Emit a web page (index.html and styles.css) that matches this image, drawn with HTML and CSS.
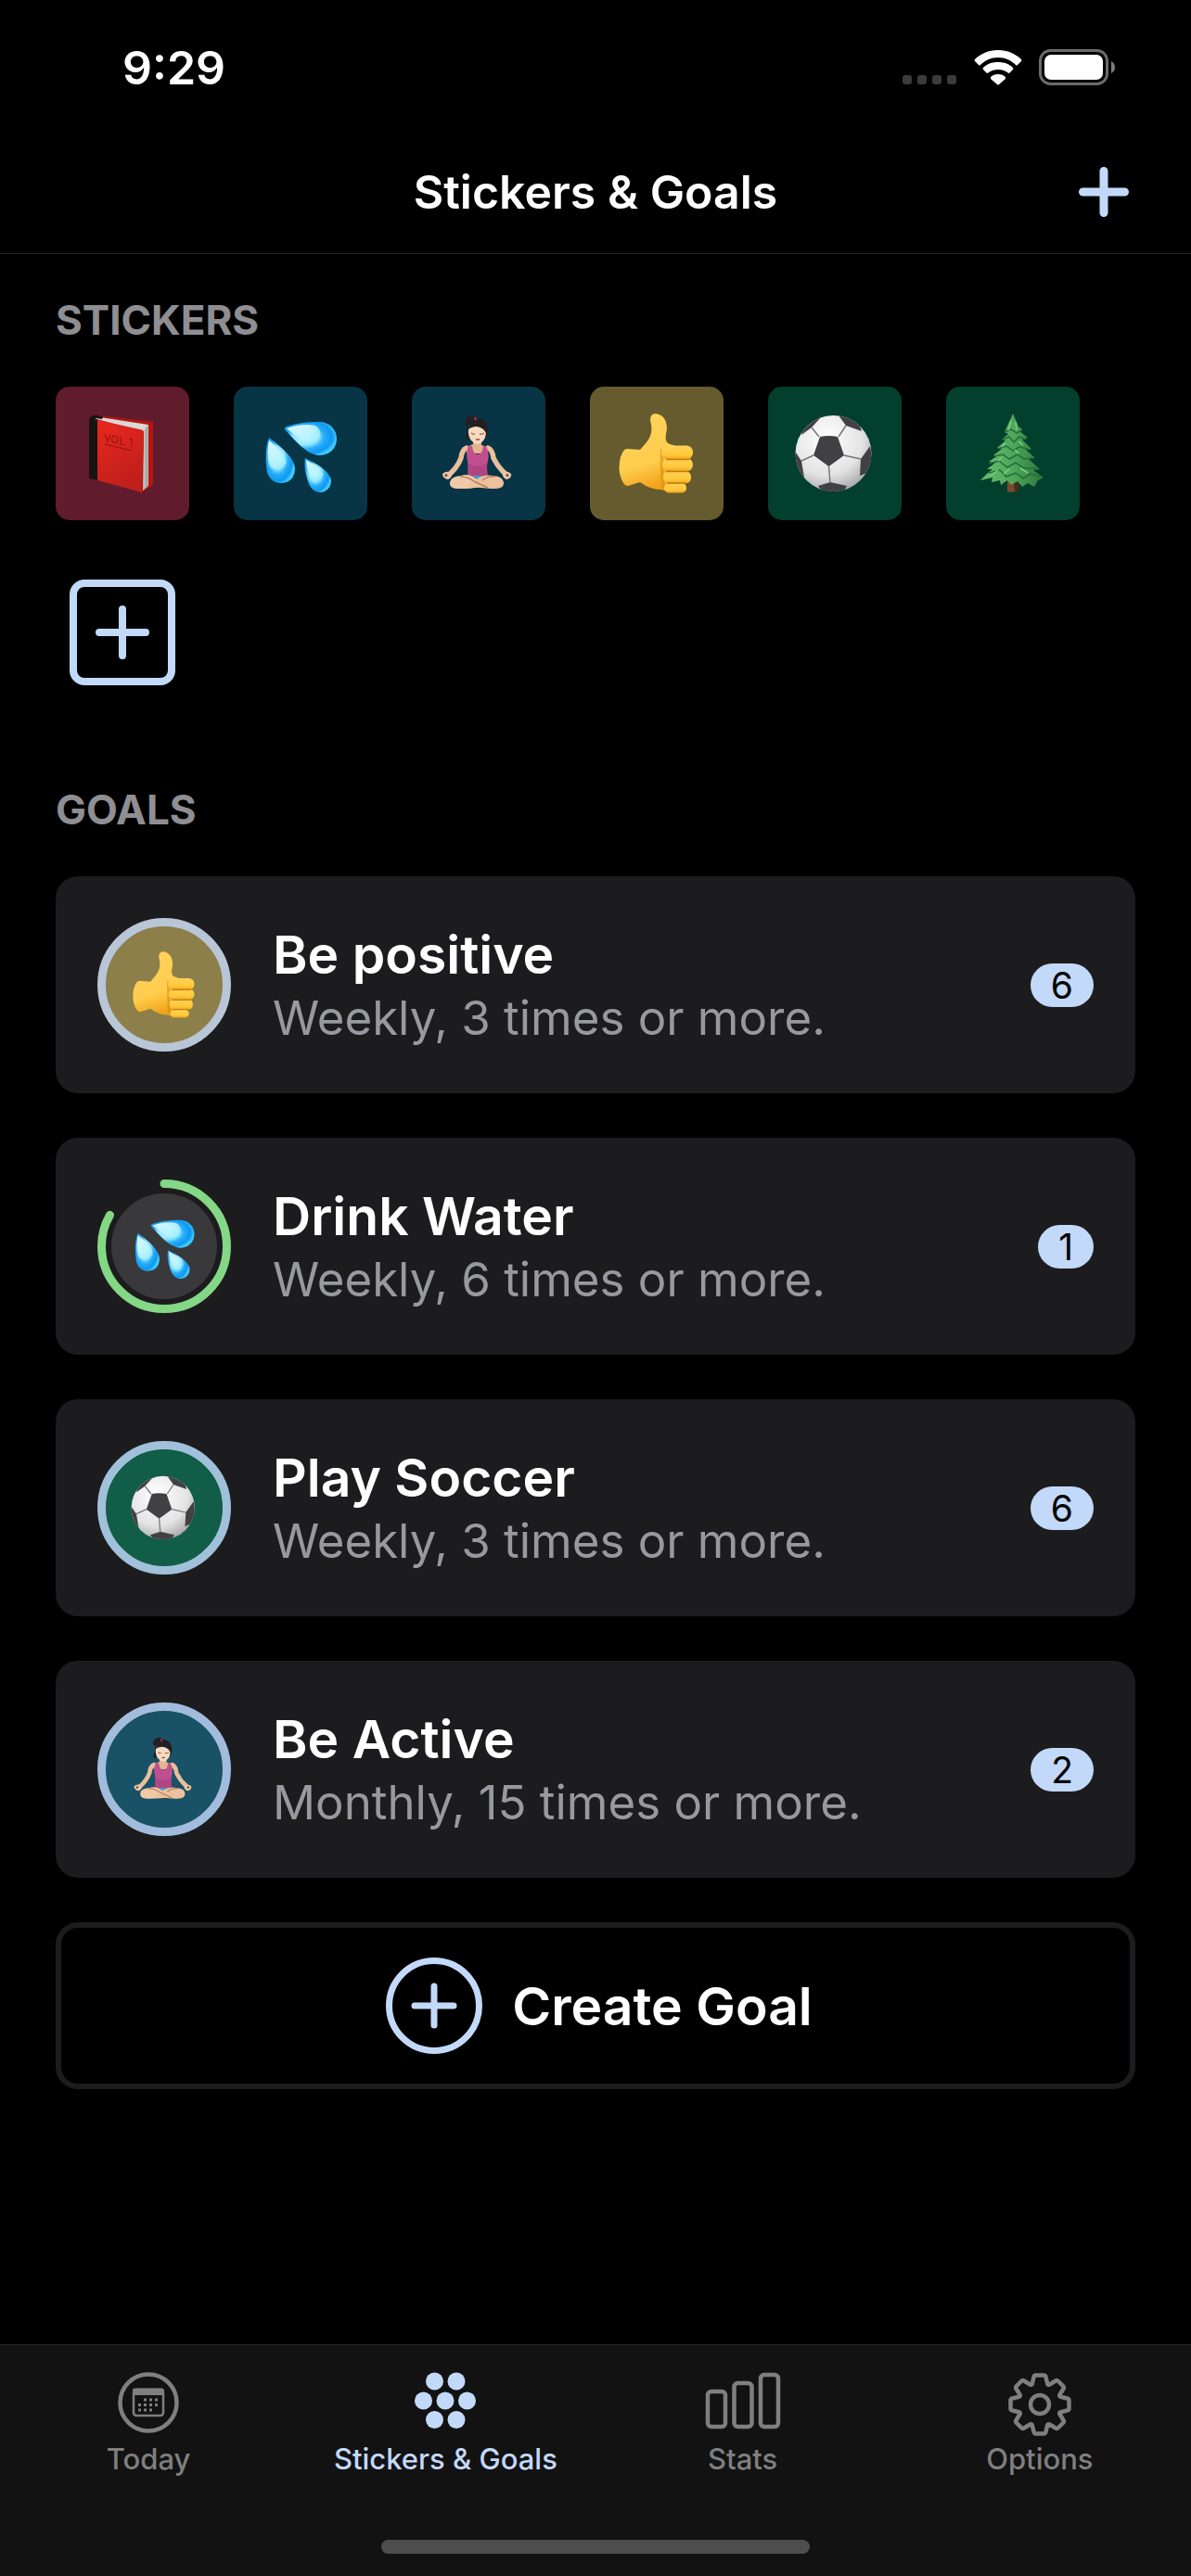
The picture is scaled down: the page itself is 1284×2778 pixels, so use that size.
FILE: index.html
```html
<!DOCTYPE html>
<html lang="en">
<head>
<meta charset="utf-8">
<meta name="viewport" content="width=device-width, initial-scale=1">
<title>Stickers &amp; Goals</title>
<link rel="stylesheet" href="styles.css">
</head>
<body>
<svg class="sprite" aria-hidden="true">
  <defs>
    <linearGradient id="g-book" x1="0" y1="0" x2="0.4" y2="1"><stop offset="0" stop-color="#ea281d"/><stop offset="1" stop-color="#c01f1c"/></linearGradient>
    <radialGradient id="g-drop" cx="0.4" cy="0.45" r="0.6"><stop offset="0" stop-color="#c9fbff"/><stop offset="0.4" stop-color="#8fe6ff"/><stop offset="0.6" stop-color="#27aefb"/><stop offset="0.85" stop-color="#0f97ee"/><stop offset="1" stop-color="#3fcaff"/></radialGradient>
    <linearGradient id="g-shine" x1="0" y1="0" x2="0.6" y2="1"><stop offset="0" stop-color="#f4fdff"/><stop offset="1" stop-color="#a6f1ff" stop-opacity="0.6"/></linearGradient>
    <linearGradient id="g-hand" x1="0" y1="0" x2="0.25" y2="1"><stop offset="0" stop-color="#ffd35c"/><stop offset="0.7" stop-color="#ffcd4e"/><stop offset="1" stop-color="#f2a41b"/></linearGradient>
    <linearGradient id="g-finger" x1="0" y1="0" x2="0" y2="1"><stop offset="0" stop-color="#ffd458"/><stop offset="0.7" stop-color="#ffc738"/><stop offset="1" stop-color="#eda01c"/></linearGradient>
    <radialGradient id="g-ball" cx="0.4" cy="0.3" r="0.75"><stop offset="0" stop-color="#ffffff"/><stop offset="0.65" stop-color="#e3e3e3"/><stop offset="1" stop-color="#a4a4a4"/></radialGradient>
    <linearGradient id="g-tree" x1="0" y1="0" x2="1" y2="0"><stop offset="0" stop-color="#66be70"/><stop offset="0.5" stop-color="#4fa85c"/><stop offset="1" stop-color="#2c763c"/></linearGradient>
    <clipPath id="ball-clip"><circle cx="70.5" cy="72" r="41"/></clipPath>

    <symbol id="book" viewBox="0 0 144 144">
      <path d="M45 31 105 38V106L100 109 93 114 60 100z" fill="#b5150f"/>
      <path d="M41 34 48 33 100 41 96 49z" fill="#d9d9d9"/>
      <path d="M95 47 100 41V107L94 112z" fill="#bdbdbd"/>
      <path d="M98 43V109" stroke="#8e8e8e"/>
      <path d="M36 35 46 36V101L36 99z" fill="#161313"/>
      <path d="M36 36Q38 30 45 31L51 32 50 35 44 34Q41 35 41 38z" fill="#161313"/>
      <path d="M45 36 93 46.500Q95 47 95 49L93 114 45 101z" fill="url(#g-book)"/>
      <path d="M53 51 56 59 59 52M62 53Q59 57 62 60 65 62 67 58 67 53 62 53M70 54V62L75 63M79 57 82 56V65M53 62 82 69" fill="none" stroke="#991414" stroke-width="1.200"/>
    </symbol>

    <symbol id="drops" viewBox="0 0 144 144">
      <path d="M55 44C66 39 80 38 92 38 103 38 111 46 111 56 111 67 103 74 92 74 78 73 66 58 55 46z" fill="url(#g-drop)"/>
      <path d="M57 45C68 41 80 40 88 42 96 47 95 57 87 60 76 60 67 53 57 45z" fill="url(#g-shine)"/>
      <path d="M38 55C34 64 34 78 36 92 38 100 44 104 51 104 60 104 66 98 66 88 65 76 50 64 38 55z" fill="url(#g-drop)"/>
      <path d="M38 58C36 68 36 78 39 86 44 91 54 90 57 82 56 73 46 64 38 58z" fill="url(#g-shine)"/>
      <path d="M77 77C75 86 78 96 81 105 84 111 88 114 94 114 101 113 105 108 105 101 104 92 90 83 77 77z" fill="url(#g-drop)"/>
      <path d="M78 79C78 86 80 93 83 98 88 102 96 99 96 94 94 88 85 83 78 79z" fill="url(#g-shine)"/>
    </symbol>

    <symbol id="thumb" viewBox="0 0 144 144">
      <path d="M71 29Q65 29 65 36C68 48 66 53 61 60L54 68 40 67Q36 67 33 76 30 87 33 97 36 107 41 107L54 103Q65 111 76 111L91 114 100 100V70L90 63Q83 62 82 58 81 53 83 46 83 31 71 29z" fill="url(#g-hand)"/>
      <path d="M78 67Q77 84 79 110" fill="none" stroke="#db8e16" stroke-width="4" opacity="0.600"/>
      <rect x="80" y="104" width="24" height="10.500" rx="5" fill="url(#g-finger)"/>
      <rect x="79" y="91" width="30" height="13.500" rx="6" fill="url(#g-finger)"/>
      <rect x="78" y="77" width="33" height="14.500" rx="7" fill="url(#g-finger)"/>
      <rect x="77" y="63.500" width="34" height="15" rx="7" fill="url(#g-finger)"/>
      <path d="M82 78.500H107M82 91.500H106M83 104H103" stroke="#c97c12" stroke-width="1.500"/>
    </symbol>

    <symbol id="ball" viewBox="0 0 144 144">
      <circle cx="70.500" cy="72" r="41" fill="url(#g-ball)"/>
      <g clip-path="url(#ball-clip)">
        <path d="M56 54Q65 52 75 54L82 74 65.500 86 49 74zM36 52 47 44 58 32 40 30zM76 31 84 42 101 48 96 32zM110 64 100 78 99 96 114 90zM54 107 67 103 85 107 80 116H60zM28 68 36 80 39 98 26 92z" fill="#414143"/>
        <path d="M55 54 47 44M76 54 84 42M82 74 100 78M65.500 86 67 104M49 74 36 80" stroke="#77777a" stroke-width="1.500"/>
      </g>
    </symbol>

    <symbol id="tree" viewBox="0 0 144 144">
      <path d="M66 100H78V112Q72 115 66 113z" fill="#7a4a2d"/>
      <path d="M73 102H78V112L74 114z" fill="#4a2b1a"/>
      <path d="M72 29 78 43 82 46 79 48 88 55 82 57 92 67 86 68 96 77 89 78 101 89 94 90 105 98 99 101 95 108 88 104 82 108 77 102 70 106 66 101 59 106 58 101 49 103 50 98 37 101 45 93 50 89 44 89 53 82 46 81 56 74 51 74 60 67 55 66 64 58 60 57 67 51 63 49z" fill="url(#g-tree)"/>
      <path d="M63 49 70 46 76 50 82 47M61 57 68 54 73 60 79 54 86 57M56 67 65 64 72 69 79 65 91 68M52 75 61 73 68 78 77 73 84 78 94 77M46 83 57 80 66 87 75 82 84 88 98 88M46 93 58 90 65 97 75 93 83 99 91 94 102 97" fill="none" stroke="#276b38" stroke-width="1.500"/>
      <path d="M70 37 67 47M75 38 76 47M64 61 60 65M78 59 83 63M60 76 56 80M74 68 78 72M56 90 48 96M68 89 62 94M80 88 88 93" stroke="#7bd182" stroke-width="1.500"/>
    </symbol>

    <symbol id="yoga" viewBox="0 0 144 144">
      <path d="M59 66Q54 68 53 77 49 87 41 94M82 66Q87 68 88 77 93 87 101 94" fill="none" stroke="#e9bf9c" stroke-width="5.500" stroke-linecap="round"/>
      <path d="M33 94Q37 90 43 93 44 98 39 100 33 99 33 94zM107 94Q103 90 98 93 97 98 102 100 108 99 107 94z" fill="#edc6a5"/>
      <circle cx="37" cy="95.500" r="1.500" fill="#7a4f38"/><circle cx="103" cy="95.500" r="1.500" fill="#7a4f38"/>
      <path d="M66 55H75V63L82 65V72H59V65L66 62z" fill="#e5b48f"/>
      <path d="M61 64H65Q66 73 71 73 76 73 77 64H80Q84 72 82 80 80 87 82 98H60Q61 87 60 80 58 72 61 64z" fill="#c04f8f"/>
      <path d="M61 83Q71 89 81 83L82 98H60z" fill="#a63f7c" opacity="0.600"/>
      <path d="M65 96H77L72 101z" fill="#3f9ad6"/>
      <path d="M63 56Q58 60 58 54L61 46 66 49zM58 41Q56 35 61 32 67 30 70 33 81 34 82 45 82 53 79 56L61 50Q59 46 60 42z" fill="#232024"/>
      <path d="M61 44Q63 39 69 40 78 41 80 50 79 60 71 62 62 60 61 50z" fill="#f5dac0"/>
      <path d="M60 47Q63 36 72 37 82 38 81 52 78 44 70 43 64 43 60 47z" fill="#232024"/>
      <path d="M68 33 69 36" stroke="#c72f77" stroke-width="2"/>
      <path d="M64 50Q66 52 68 51M73 51Q76 52 78 50" fill="none" stroke="#67463a"/>
      <path d="M69 57H73" stroke="#9d4438" stroke-width="1.500"/>
      <path d="M41 103Q42 97 53 96 61 93 69 99L82 107Q68 110 53 110 40 111 41 103z" fill="#f0c9a8"/>
      <path d="M99 103Q98 97 88 96 79 94 71 99L59 107Q70 109 86 110 100 111 99 103z" fill="#edc19d"/>
      <path d="M52 97Q60 97 67 102L82 109M90 97Q82 96 76 101" fill="none" stroke="#b9825e" stroke-width="1.500"/>
    </symbol>
  </defs>
</svg>

<div class="status">
  <time class="clock">9:29</time>
  <div class="status-icons">
    <svg width="60" height="40" viewBox="0 0 60 40" role="img" aria-label="No signal" fill="#3b3b3b">
      <rect x="1" y="28" width="10" height="10" rx="3"/><rect x="17" y="28" width="10" height="10" rx="3"/><rect x="33" y="28" width="10" height="10" rx="3"/><rect x="49" y="28" width="10" height="10" rx="3"/>
    </svg>
    <svg width="52" height="40" viewBox="0 0 52 40" role="img" aria-label="Wi-Fi" fill="#fff">
      <path d="M26 1C16 1 7 5 1 11Q0 12 1 13L5 17Q6 18 7 17C12 12 18 9 26 9S40 12 45 17Q46 18 47 17L51 13Q52 12 51 11C45 5 36 1 26 1z"/>
      <path d="M26 14C19 14 14 16 10 20Q9 21 10 22L14 26Q15 26 16 25C19 23 22 22 26 22S33 23 36 25Q37 26 38 26L42 22Q43 21 42 20C38 16 33 14 26 14z"/>
      <path d="M26 27C23 27 20 28 18 30Q18 31 18 32L25 38Q26 39 27 38L34 32Q34 31 34 30C32 28 29 27 26 27z"/>
    </svg>
    <svg width="82" height="40" viewBox="0 0 82 40" role="img" aria-label="Battery full">
      <rect x="1.500" y="1.500" width="72" height="36" rx="11" fill="none" stroke="#6b6b6b" stroke-width="3"/>
      <rect x="6" y="6" width="63" height="27" rx="7" fill="#fff"/>
      <path d="M78 13Q82 15 82 19.500T78 26z" fill="#7b7b7b"/>
    </svg>
  </div>
</div>

<header class="navbar">
  <h1 class="navbar-title">Stickers &amp; Goals</h1>
  <button class="navbar-add" type="button" aria-label="Add">
    <svg width="54" height="54" viewBox="0 0 54 54"><path d="M27 4.500V49.500M4.500 27H49.500" stroke="currentColor" stroke-width="9" stroke-linecap="round"/></svg>
  </button>
</header>

<main class="content">
  <h2 class="section-title">STICKERS</h2>
  <div class="stickers">
    <button class="sticker sticker-red" type="button" aria-label="Book"><svg class="sticker-art"><use href="#book"/></svg></button>
    <button class="sticker sticker-blue" type="button" aria-label="Water drops"><svg class="sticker-art"><use href="#drops"/></svg></button>
    <button class="sticker sticker-blue" type="button" aria-label="Yoga"><svg class="sticker-art"><use href="#yoga"/></svg></button>
    <button class="sticker sticker-gold" type="button" aria-label="Thumbs up"><svg class="sticker-art"><use href="#thumb"/></svg></button>
    <button class="sticker sticker-green" type="button" aria-label="Soccer ball"><svg class="sticker-art"><use href="#ball"/></svg></button>
    <button class="sticker sticker-green" type="button" aria-label="Tree"><svg class="sticker-art"><use href="#tree"/></svg></button>
    <button class="sticker sticker-new" type="button" aria-label="Add sticker">
      <svg width="114" height="114" viewBox="0 0 114 114" fill="none" stroke="currentColor" stroke-width="8">
        <rect x="4" y="4" width="106" height="106" rx="12"/>
        <path d="M57 32V82M32 57H82" stroke-linecap="round"/>
      </svg>
    </button>
  </div>

  <h2 class="section-title">GOALS</h2>
  <ul class="goals">
    <li><a class="goal" href="#be-positive">
      <span class="goal-icon ring-gold"><svg class="goal-art"><use href="#thumb"/></svg></span>
      <span class="goal-text"><span class="goal-name">Be positive</span><span class="goal-rule">Weekly, 3 times or more.</span></span>
      <span class="badge">6</span>
    </a></li>
    <li><a class="goal" href="#drink-water">
      <span class="goal-icon">
        <svg class="goal-progress" viewBox="0 0 144 144" fill="none">
          <circle cx="72" cy="72" r="57" fill="#39393b"/>
          <circle cx="72" cy="72" r="67.500" stroke="#84d785" stroke-width="9" stroke-linecap="round" pathLength="6" stroke-dasharray="5 6" transform="rotate(-90 72 72)"/>
          <use href="#drops" x="12" y="12" width="120" height="120"/>
        </svg>
      </span>
      <span class="goal-text"><span class="goal-name">Drink Water</span><span class="goal-rule">Weekly, 6 times or more.</span></span>
      <span class="badge">1</span>
    </a></li>
    <li><a class="goal" href="#play-soccer">
      <span class="goal-icon ring-green"><svg class="goal-art"><use href="#ball"/></svg></span>
      <span class="goal-text"><span class="goal-name">Play Soccer</span><span class="goal-rule">Weekly, 3 times or more.</span></span>
      <span class="badge">6</span>
    </a></li>
    <li><a class="goal" href="#be-active">
      <span class="goal-icon ring-blue"><svg class="goal-art"><use href="#yoga"/></svg></span>
      <span class="goal-text"><span class="goal-name">Be Active</span><span class="goal-rule">Monthly, 15 times or more.</span></span>
      <span class="badge">2</span>
    </a></li>
  </ul>
  <button class="create" type="button">
    <svg class="create-icon" width="104" height="104" viewBox="0 0 104 104" fill="none" stroke="currentColor">
      <circle cx="52" cy="52" r="48.500" stroke-width="7"/>
      <path d="M52 31V73M31 52H73" stroke-width="7" stroke-linecap="round"/>
    </svg>
    Create Goal
  </button>
</main>

<footer class="tabbar">
  <nav class="tabs">
    <a class="tab" href="#today">
      <svg class="tab-icon" width="66" height="72" viewBox="0 0 66 72" fill="none" stroke="currentColor">
        <circle cx="33" cy="33" r="30.500" stroke-width="4.500"/>
        <rect x="17" y="19" width="32" height="28" rx="3" stroke-width="2.500"/>
        <path d="M16 19Q16 17.500 19 17.500H47Q50 17.500 50 20V25H16z" fill="currentColor" stroke="none"/>
        <path d="M28 30H43M22 35.500H43M22 41H37" stroke-width="3" stroke-dasharray="3 3"/>
      </svg>
      Today
    </a>
    <a class="tab tab-active" href="#stickers" aria-current="page">
      <svg class="tab-icon" width="66" height="72" viewBox="0 0 66 72" fill="currentColor">
        <circle cx="21.500" cy="10" r="9.500"/><circle cx="45" cy="10" r="9.500"/>
        <circle cx="9.500" cy="31" r="9.500"/><circle cx="33" cy="31" r="9.500"/><circle cx="56.500" cy="31" r="9.500"/>
        <circle cx="21.500" cy="51.500" r="9.500"/><circle cx="45" cy="51.500" r="9.500"/>
      </svg>
      Stickers &amp; Goals
    </a>
    <a class="tab" href="#stats">
      <svg class="tab-icon" width="82" height="72" viewBox="0 0 82 72" fill="none" stroke="currentColor" stroke-width="4.500">
        <rect x="3" y="21" width="19" height="38" rx="4"/><rect x="31.500" y="12" width="19" height="47" rx="4"/><rect x="60" y="3" width="19" height="56" rx="4"/>
      </svg>
      Stats
    </a>
    <a class="tab" href="#options">
      <svg class="tab-icon" width="72" height="72" viewBox="-36 -35 72 72" fill="none" stroke="currentColor" stroke-width="4.500" stroke-linejoin="round">
        <path d="M-4.500-31.500H4.500Q6-31.500 6.500-29.500L8.200-22.500Q8.800-20.500 10.500-21.500L17-25.500Q18.500-26.500 20-25L25-20Q26.500-18.500 25.500-17L21.500-10.500Q20.500-8.800 22.500-8.200L29.500-6.500Q31.500-6 31.500-4.500V4.500Q31.500 6 29.500 6.500L22.500 8.200Q20.500 8.800 21.500 10.500L25.500 17Q26.500 18.500 25 20L20 25Q18.500 26.500 17 25.500L10.500 21.500Q8.800 20.500 8.200 22.500L6.500 29.500Q6 31.500 4.500 31.500H-4.500Q-6 31.500-6.500 29.500L-8.200 22.500Q-8.800 20.500-10.500 21.500L-17 25.500Q-18.500 26.500-20 25L-25 20Q-26.500 18.500-25.500 17L-21.500 10.500Q-20.500 8.800-22.500 8.200L-29.500 6.500Q-31.500 6-31.500 4.500V-4.500Q-31.500-6-29.500-6.500L-22.500-8.200Q-20.500-8.800-21.500-10.500L-25.500-17Q-26.500-18.500-25-20L-20-25Q-18.500-26.500-17-25.500L-10.500-21.500Q-8.800-20.500-8.200-22.500L-6.500-29.500Q-6-31.500-4.500-31.500z"/>
        <circle r="10"/>
      </svg>
      Options
    </a>
  </nav>
  <div class="home-indicator"></div>
</footer>
</body>
</html>
```

FILE: styles.css
```css
:root {
  --accent: #c3d9f9;
  --card: #1c1c1e;
  --muted: #8e8e93;
}

* {
  box-sizing: border-box;
}

body {
  margin: 0;
  min-height: 100vh;
  display: flex;
  flex-direction: column;
  background: #000;
  color: #fff;
  font-family: Inter, "Liberation Sans", sans-serif;
}

button {
  margin: 0;
  padding: 0;
  border: 0;
  background: none;
  color: inherit;
  font: inherit;
}

a {
  color: inherit;
  text-decoration: none;
}

svg {
  display: block;
}

.sprite {
  position: absolute;
  width: 0;
  height: 0;
}

.status {
  display: flex;
  align-items: center;
  justify-content: space-between;
  height: 141px;
  padding: 4px 82px 0 132px;
}

.clock {
  font-size: 50px;
  font-weight: 600;
  line-height: 60px;
}

.status-icons {
  display: flex;
  gap: 18px;
}

.navbar {
  display: grid;
  grid-template-columns: 54px 1fr 54px;
  align-items: center;
  height: 133px;
  padding: 0 67px;
  border-bottom: 1px solid #262627;
}

.navbar-title {
  grid-column: 2;
  margin: 0;
  font-size: 50px;
  font-weight: 600;
  line-height: 60px;
  text-align: center;
}

.navbar-add {
  color: var(--accent);
}

.content {
  flex: 1;
  padding: 44px 60px 48px;
}

.section-title {
  margin: 0 0 45px;
  color: var(--muted);
  font-size: 44px;
  font-weight: 700;
  line-height: 54px;
}

.stickers {
  display: flex;
  flex-wrap: wrap;
  gap: 49px 48px;
  margin-bottom: 92px;
}

.sticker {
  display: grid;
  place-items: center;
  width: 144px;
  height: 144px;
  border-radius: 15px;
}

.sticker-art {
  width: 144px;
  height: 144px;
}

.sticker-red { background: #601c2c; }
.sticker-blue { background: #083545; }
.sticker-gold { background: #655b2f; }
.sticker-green { background: #023f2c; }
.sticker-new { color: var(--accent); }

.goals {
  display: flex;
  flex-direction: column;
  gap: 48px;
  margin: 0 0 48px;
  padding: 0;
  list-style: none;
}

.goal {
  display: flex;
  align-items: center;
  gap: 45px;
  padding: 45px;
  border-radius: 24px;
  background: var(--card);
}

.goal-icon {
  display: grid;
  flex: none;
  place-items: center;
  width: 144px;
  height: 144px;
  border-radius: 50%;
}

.goal-art {
  width: 120px;
  height: 120px;
}

.goal-progress {
  width: 144px;
  height: 144px;
}

.ring-gold {
  border: 9px solid #b9c6d8;
  background: #8c7f4a;
}

.ring-green {
  border: 9px solid #a1c0da;
  background: #115d47;
}

.ring-blue {
  border: 9px solid #a1bcdd;
  background: #195166;
}

.goal-text {
  display: flex;
  flex: 1;
  flex-direction: column;
}

.goal-name {
  font-size: 57px;
  font-weight: 600;
  line-height: 72px;
}

.goal-rule {
  color: #98989f;
  font-size: 51px;
  line-height: 64px;
}

.badge {
  padding: 0 22px;
  border-radius: 24px;
  background: var(--accent);
  color: #000;
  font-size: 39px;
  line-height: 47px;
}

.create {
  display: flex;
  align-items: center;
  justify-content: center;
  gap: 32px;
  width: 100%;
  height: 180px;
  padding-left: 8px;
  border: 6px solid var(--card);
  border-radius: 24px;
  font-size: 57px;
  font-weight: 600;
}

.create-icon {
  color: var(--accent);
}

.tabbar {
  padding: 29px 0 24px;
  border-top: 1px solid #262627;
  background: #121212;
}

.tabs {
  display: grid;
  grid-template-columns: repeat(4, 1fr);
  margin-bottom: 69px;
  padding-right: 3px;
}

.tab {
  display: flex;
  flex-direction: column;
  align-items: center;
  gap: 4px;
  color: #7f7f7f;
  font-size: 31px;
  font-weight: 500;
  line-height: 36px;
}

.tab-active {
  color: var(--accent);
}

.home-indicator {
  width: 36%;
  height: 15px;
  margin: 0 auto;
  border-radius: 8px;
  background: #4d4d4d;
}
```
